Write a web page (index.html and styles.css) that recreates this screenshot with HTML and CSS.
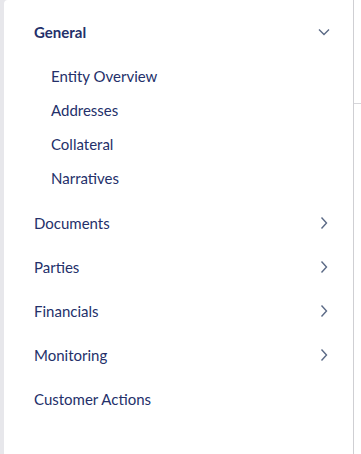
FILE: index.html
```html
<!DOCTYPE html>
<html lang="en">
<head>
    <meta charset="UTF-8">
    <meta name="viewport" content="width=device-width, initial-scale=1.0">
    <title>Entity Menu</title>
    <link rel="stylesheet" href="styles.css">
</head>
<body>
    <div class="page">
        <nav class="sidebar">
            <div class="section open">
                <div class="section-head">
                    <span class="section-title">General</span>
                    <svg class="chevron" width="14" height="14" viewBox="0 0 14 14"><path d="M2 4.5l5 5 5-5" fill="none" stroke="#5b6a86" stroke-width="1.4"/></svg>
                </div>
                <ul class="sub-list">
                    <li>Entity Overview</li>
                    <li>Addresses</li>
                    <li>Collateral</li>
                    <li>Narratives</li>
                </ul>
            </div>
            <div class="section">
                <div class="section-head">
                    <span>Documents</span>
                    <svg class="chevron" width="14" height="14" viewBox="0 0 14 14"><path d="M4.5 1.5l5 5.5-5 5.5" fill="none" stroke="#5b6a86" stroke-width="1.4"/></svg>
                </div>
            </div>
            <div class="section">
                <div class="section-head">
                    <span>Parties</span>
                    <svg class="chevron" width="14" height="14" viewBox="0 0 14 14"><path d="M4.5 1.5l5 5.5-5 5.5" fill="none" stroke="#5b6a86" stroke-width="1.4"/></svg>
                </div>
            </div>
            <div class="section">
                <div class="section-head">
                    <span>Financials</span>
                    <svg class="chevron" width="14" height="14" viewBox="0 0 14 14"><path d="M4.5 1.5l5 5.5-5 5.5" fill="none" stroke="#5b6a86" stroke-width="1.4"/></svg>
                </div>
            </div>
            <div class="section">
                <div class="section-head">
                    <span>Monitoring</span>
                    <svg class="chevron" width="14" height="14" viewBox="0 0 14 14"><path d="M4.5 1.5l5 5.5-5 5.5" fill="none" stroke="#5b6a86" stroke-width="1.4"/></svg>
                </div>
            </div>
            <div class="section">
                <div class="section-head">
                    <span>Customer Actions</span>
                </div>
            </div>
        </nav>
        <div class="rest">
            <div class="rest-line"></div>
        </div>
    </div>
</body>
</html>
```
FILE: styles.css
```css
html, body {
    height: 100%;
}
body {
    margin: 0;
    font-family: Lato, 'Noto Sans', sans-serif;
    background-color: #e7e7eb;
    color: #24306a;
}
.page {
    display: flex;
    height: 100%;
    padding-left: 4px;
    box-sizing: border-box;
}
.sidebar {
    width: 350px;
    background-color: white;
    border-top-left-radius: 4px;
    border-right: 1px solid #cfcfd3;
    padding-top: 10px;
    box-sizing: border-box;
}
.rest {
    flex: 1;
    background-color: white;
    padding-top: 103px;
}
.rest-line {
    border-top: 1px solid #d6d6da;
}
.section-head {
    display: flex;
    align-items: center;
    justify-content: space-between;
    height: 44px;
    padding: 0 22px 0 30px;
    font-size: 15px;
}
.section-title {
    font-weight: bold;
}
.sub-list {
    list-style: none;
    margin: 0;
    padding: 5px 0 6px 47px;
    font-size: 15px;
}
.sub-list li {
    height: 34px;
    line-height: 34px;
}
```
